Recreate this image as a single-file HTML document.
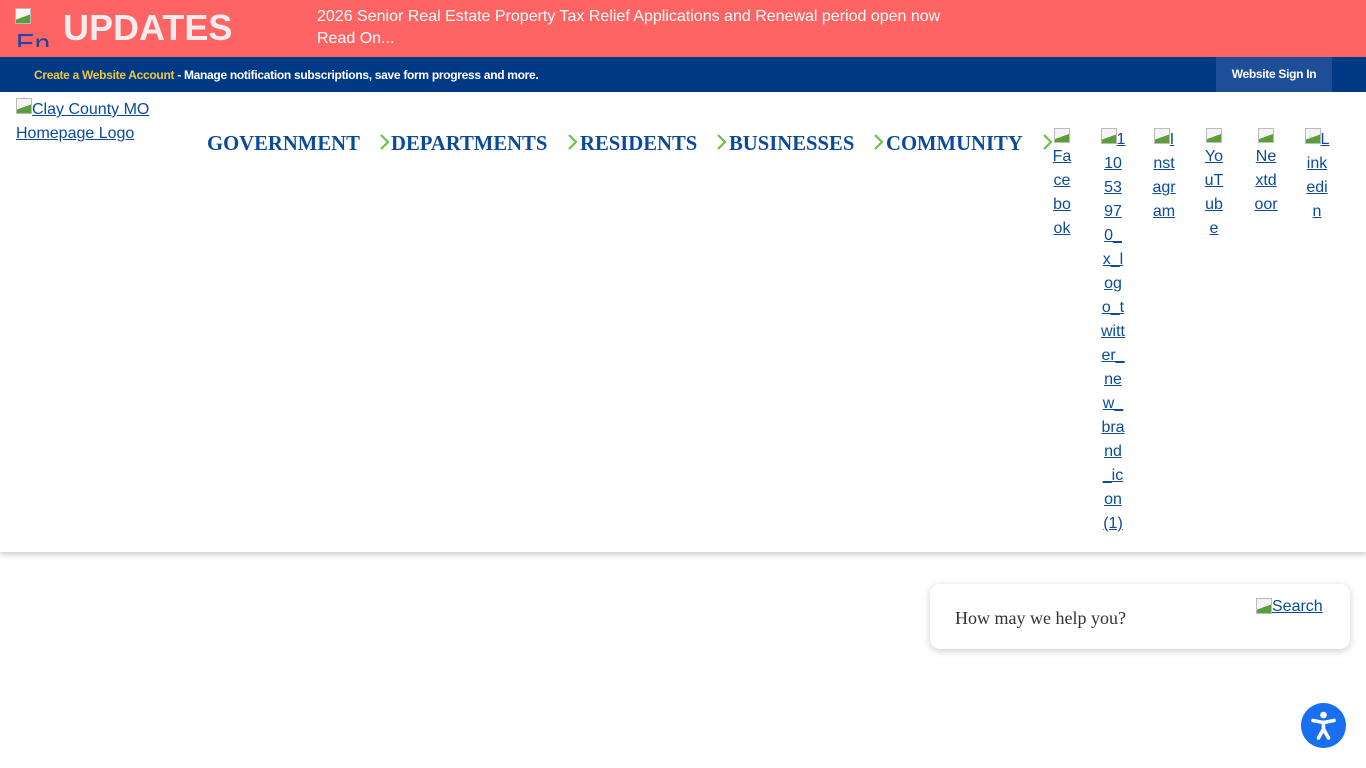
<!DOCTYPE html>
<html><head><meta charset="utf-8"><style>
*{margin:0;padding:0;box-sizing:border-box}
body{width:1366px;height:768px;overflow:hidden;background:#fff;font-family:"Liberation Sans",sans-serif;position:relative}
.abs{position:absolute}
a{color:#0b4a9a;text-decoration:underline}
.bi{display:inline-block;width:16px;height:16px;border:1px solid #bbb;background:linear-gradient(160deg,#f4f4f4 55%,#5a9e3a 56%);vertical-align:top}
.soc{position:absolute;top:128px;width:26px;text-align:center;font-size:16px;line-height:24px;color:#0b4a9a;text-decoration:underline}
.soc .blk{display:block;margin:0 auto 2px;height:15px;width:16px}
.nav{position:absolute;top:133px;font-family:"Liberation Serif",serif;font-weight:bold;font-size:20.7px;color:#0b4a9a}
.chev{position:absolute;top:134px}
</style></head><body>
<div class="abs" style="left:0;top:0;width:1366px;height:57px;background:#fe6464"></div>
<span class="abs bi" style="left:15px;top:8px"></span>
<div class="abs" style="left:16px;top:28px;width:40px;height:19px;overflow:hidden;color:#1e44a8;font-size:28px;line-height:32px">En</div>
<div class="abs" style="left:63px;top:8px;font-size:36px;font-weight:bold;color:#f2ecec;line-height:40px">UPDATES</div>
<div class="abs" style="left:317px;top:6px;font-size:16px;color:#fff;line-height:22px">2026 Senior Real Estate Property Tax Relief Applications and Renewal period open now<br>Read On...</div>
<div class="abs" style="left:0;top:57px;width:1366px;height:35px;background:#003a87"></div>
<div class="abs" style="left:34px;top:68px;font-size:12px;font-weight:bold;color:#fff;letter-spacing:-0.3px"><span style="color:#f0c63c">Create a Website Account</span> - Manage notification subscriptions, save form progress and more.</div>
<div class="abs" style="left:1216px;top:57px;width:116px;height:35px;background:#1d4f99;color:#fff;font-size:12px;font-weight:bold;text-align:center;line-height:35px;letter-spacing:-0.3px">Website Sign In</div>
<div class="abs" style="left:0;top:92px;width:1366px;height:460px;background:#fff;box-shadow:0 3px 5px rgba(0,0,0,.18)"></div>
<div class="abs" style="left:16px;top:98px;font-size:16px;line-height:24px"><a><span class="bi"></span>Clay County MO<br>Homepage Logo</a></div>
<div class="nav" style="left:207px">GOVERNMENT</div>
<svg class="chev" style="left:379px" width="12" height="16"><polyline points="2,1 9,8 2,15" fill="none" stroke="#6cc24a" stroke-width="2.2"/></svg>
<div class="nav" style="left:391px">DEPARTMENTS</div>
<svg class="chev" style="left:567px" width="12" height="16"><polyline points="2,1 9,8 2,15" fill="none" stroke="#6cc24a" stroke-width="2.2"/></svg>
<div class="nav" style="left:580px">RESIDENTS</div>
<svg class="chev" style="left:716px" width="12" height="16"><polyline points="2,1 9,8 2,15" fill="none" stroke="#6cc24a" stroke-width="2.2"/></svg>
<div class="nav" style="left:729px">BUSINESSES</div>
<svg class="chev" style="left:873px" width="12" height="16"><polyline points="2,1 9,8 2,15" fill="none" stroke="#6cc24a" stroke-width="2.2"/></svg>
<div class="nav" style="left:886px">COMMUNITY</div>
<svg class="chev" style="left:1042px" width="12" height="16"><polyline points="2,1 9,8 2,15" fill="none" stroke="#6cc24a" stroke-width="2.2"/></svg>
<div class="soc" style="left:1049px"><span class="bi blk"></span>Fa<br>ce<br>bo<br>ok</div>
<div class="soc" style="left:1098px;width:30px"><span class="bi"></span>1<br>10<br>53<br>97<br>0_<br>x_l<br>og<br>o_t<br>witt<br>er_<br>ne<br>w_<br>bra<br>nd<br>_ic<br>on<br>(1)</div>
<div class="soc" style="left:1150px;width:28px"><span class="bi"></span>I<br>nst<br>agr<br>am</div>
<div class="soc" style="left:1201px"><span class="bi blk"></span>Yo<br>uT<br>ub<br>e</div>
<div class="soc" style="left:1252px;width:28px"><span class="bi blk"></span>Ne<br>xtd<br>oor</div>
<div class="soc" style="left:1302px;width:30px"><span class="bi"></span>L<br>ink<br>edi<br>n</div>
<div class="abs" style="left:930px;top:584px;width:420px;height:65px;background:#fff;border-radius:10px;box-shadow:0 2px 8px rgba(0,0,0,.2)"></div>
<div class="abs" style="left:955px;top:608px;font-family:'Liberation Serif',serif;font-size:18px;color:#333">How may we help you?</div>
<div class="abs" style="left:1256px;top:598px;font-size:16px"><a><span class="bi"></span>Search</a></div>
<div class="abs" style="left:1301px;top:703px;width:45px;height:45px;border-radius:50%;background:#1a6ef0">
<svg width="45" height="45" viewBox="0 0 45 45"><circle cx="22.5" cy="12" r="3.3" fill="#fff"/><path d="M12 17.5 L22.5 19.5 L33 17.5 M22.5 19.5 L22.5 26 M22.5 26 L17.5 35 M22.5 26 L27.5 35" stroke="#fff" stroke-width="3.6" fill="none" stroke-linecap="round" stroke-linejoin="round"/></svg></div>
</body></html>
